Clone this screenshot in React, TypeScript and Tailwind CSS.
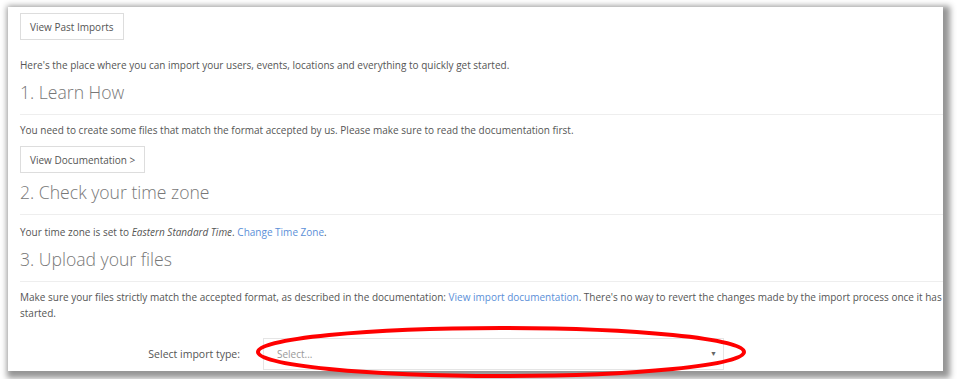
import React from "react";

function Heading({ children }: { children: React.ReactNode }) {
  return (
    <>
      <h2 className="mt-[5px] text-[17.6px] leading-[28px] font-light text-[#777]">{children}</h2>
      <div className="mt-[8px] h-px bg-[#eee] -mr-[12px]" />
    </>
  );
}

function OutlineButton({ children }: { children: React.ReactNode }) {
  return (
    <button className="h-[27px] px-[9px] border border-[#ddd] bg-white text-[10px] text-[#555] leading-none">
      {children}
    </button>
  );
}

export default function App() {
  return (
    <div
      className="relative w-[957px] h-[379px] bg-white overflow-hidden pt-[7px] pl-[8px]"
      style={{ fontFamily: '"Open Sans", "Noto Sans", sans-serif' }}
    >
      <div className="w-[935px] h-[364px] bg-white shadow-[3px_3px_6px_4px_rgba(0,0,0,0.42)] overflow-hidden pl-[12px] pt-[6px] text-[10px] leading-[16px] text-[#555]">
        <OutlineButton>View Past Imports</OutlineButton>
        <p className="mt-[17px]">
          Here's the place where you can import your users, events, locations and everything to quickly get started.
        </p>
        <Heading>1. Learn How</Heading>
        <p className="mt-[7px]">
          You need to create some files that match the format accepted by us. Please make sure to read the documentation first.
        </p>
        <div className="mt-[8px]">
          <OutlineButton>View Documentation &gt;</OutlineButton>
        </div>
        <Heading>2. Check your time zone</Heading>
        <p className="mt-[9px]">
          Your time zone is set to <em>Eastern Standard Time</em>.{" "}
          <a className="text-[#5b8fd8]">Change Time Zone</a>.
        </p>
        <Heading>3. Upload your files</Heading>
        <p className="mt-[7px]">
          Make sure your files strictly match the accepted format, as described in the documentation:{" "}
          <a className="text-[#5b8fd8]">View import documentation</a>. There's no way to revert the changes made by
          the import process once it has started.
        </p>
        <div className="mt-[17px] flex items-center">
          <label className="w-[243px] pr-[23px] text-right text-[#555] text-[10.5px]">Select import type:</label>
          <div className="w-[461px] h-[32px] border border-[#e5e5e5] flex items-center justify-between pl-[13px] pr-[6px] text-[#999]">
            <span>Select...</span>
            <span className="text-[7px] text-[#666]">▼</span>
          </div>
        </div>
      </div>
      <svg className="absolute left-0 top-0" width="957" height="379" viewBox="0 0 957 379">
        <ellipse cx="501" cy="352" rx="243" ry="24" fill="none" stroke="#f00" strokeWidth="4" />
      </svg>
    </div>
  );
}
